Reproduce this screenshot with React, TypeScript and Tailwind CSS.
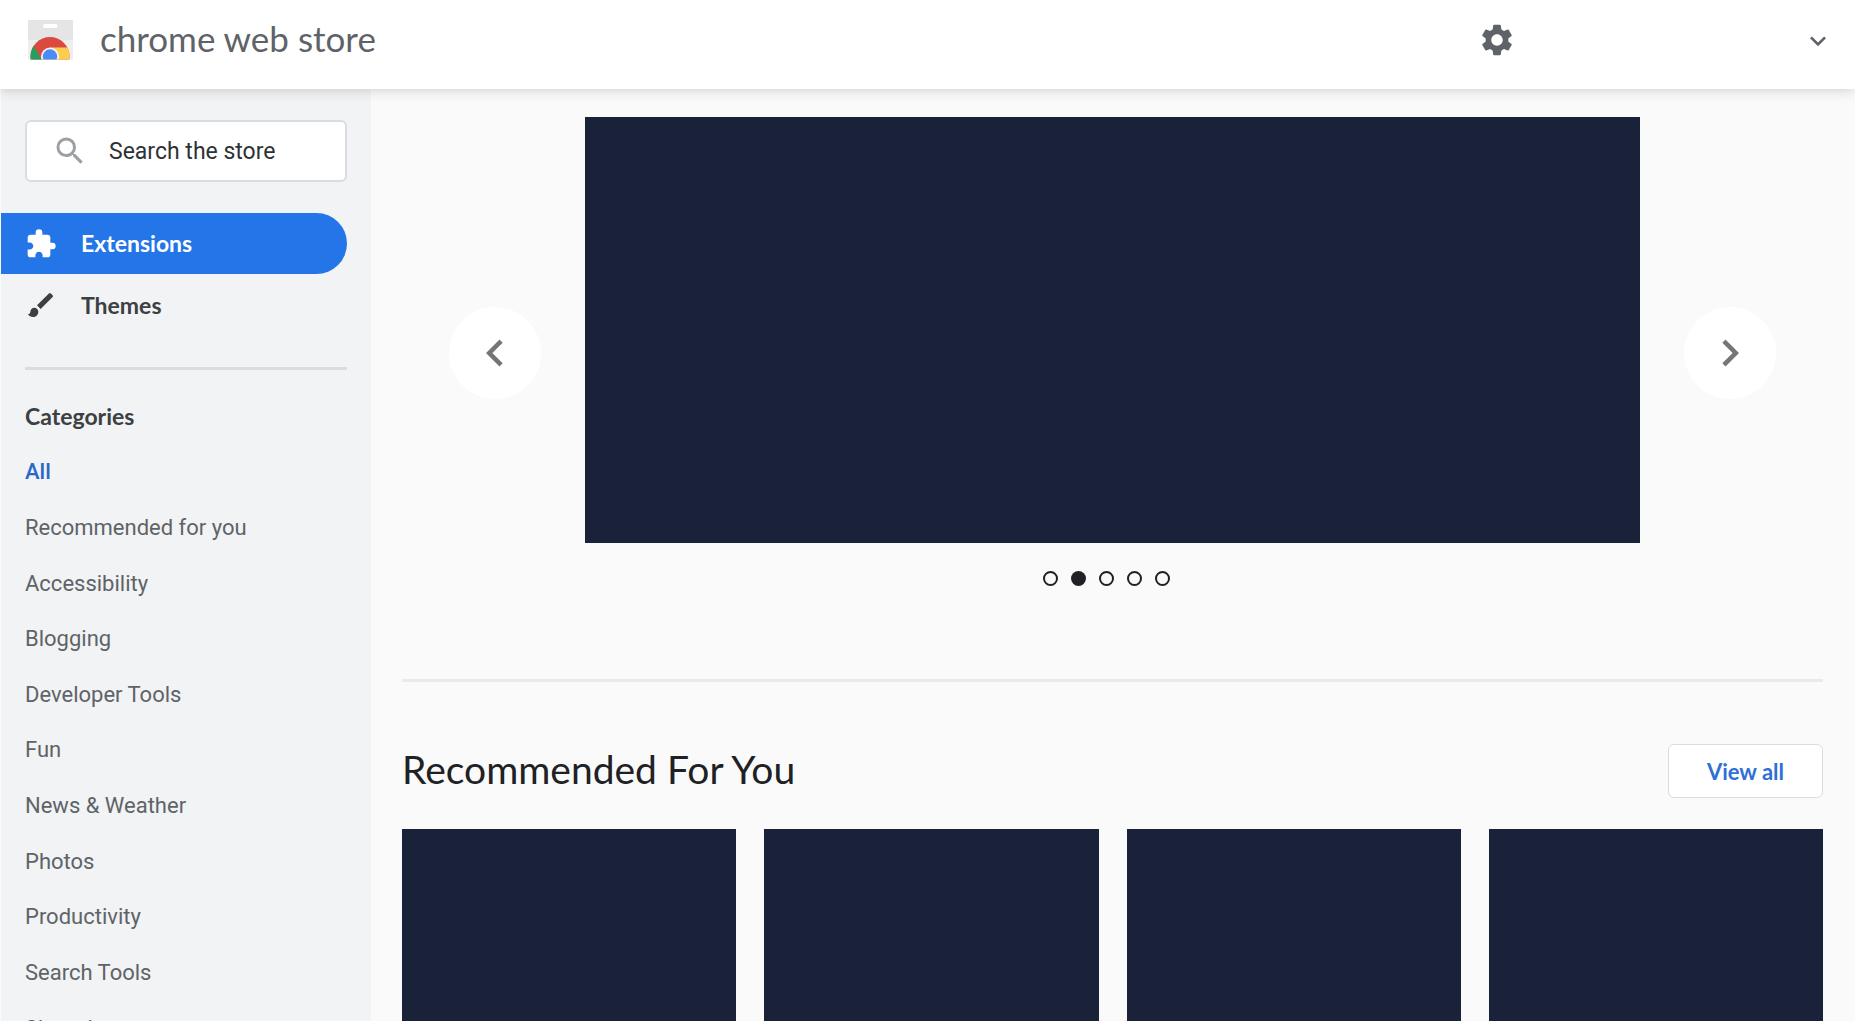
import type { ReactNode } from "react";
import {
  MdBrush,
  MdChevronLeft,
  MdChevronRight,
  MdExpandMore,
  MdExtension,
  MdSearch,
  MdSettings,
} from "react-icons/md";

const categories = [
  "All",
  "Recommended for you",
  "Accessibility",
  "Blogging",
  "Developer Tools",
  "Fun",
  "News & Weather",
  "Photos",
  "Productivity",
  "Search Tools",
  "Shopping",
];

const slides = [1, 2, 3, 4, 5];
const activeSlide = 2;
const recommended = ["first", "second", "third", "fourth"];

function StoreLogo() {
  return (
    <svg viewBox="0 0 45 40" className="h-10 w-[45px]" aria-hidden="true">
      <defs>
        <clipPath id="bag">
          <rect width="45" height="39.5" rx="1" />
        </clipPath>
        <clipPath id="wheel">
          <circle cx="22" cy="36.5" r="19.5" />
        </clipPath>
      </defs>
      <g clipPath="url(#bag)">
        <rect width="45" height="40" fill="#eeeeee" />
        <rect width="45" height="20" fill="#e5e5e5" />
        <rect x="15" y="4" width="14.5" height="4" rx="2" fill="#ffffff" />
        <g clipPath="url(#wheel)">
          <rect width="45" height="40" fill="#db4a3f" />
          <path d="M5.5 26 L14 40 H0 V26 Z" fill="#23a05d" />
          <path d="M22 27.5 H45 V40 H22 Z" fill="#fecd4e" />
        </g>
        <circle cx="22" cy="36.5" r="9" fill="#f4f4f4" />
        <circle cx="22" cy="36.5" r="7.2" fill="#4b8bf5" />
      </g>
    </svg>
  );
}

function CarouselButton({ label, children }: { label: string; children: ReactNode }) {
  return (
    <button
      type="button"
      aria-label={label}
      className="mt-[46px] flex size-[92px] shrink-0 items-center justify-center rounded-full bg-white text-[#757575]"
    >
      {children}
    </button>
  );
}

function Header() {
  return (
    <header className="relative z-10 flex h-[89px] shrink-0 items-center bg-white pr-[21px] pb-[9px] pl-7 text-[#5f6368] shadow-[0_1px_12px_rgba(0,0,0,0.18)]">
      <a href="#home" className="flex flex-1 items-center gap-[27px]">
        <StoreLogo />
        <span className="pb-1 font-[Lato] text-[35px] leading-9">chrome web store</span>
      </a>
      <button type="button" aria-label="Settings" className="mr-[286px]">
        <MdSettings className="size-[38px]" />
      </button>
      <button type="button" aria-label="Account menu" className="pt-0.5">
        <MdExpandMore className="size-8" />
      </button>
    </header>
  );
}

function Sidebar() {
  return (
    <aside className="w-[371px] shrink-0 border-l border-[#fafafa] bg-[#f1f3f4] pr-6">
      <label className="mt-[31px] ml-6 flex h-[62px] items-center gap-[21px] rounded-md border-2 border-[#dadce0] bg-white pl-[25px]">
        <MdSearch className="size-9 shrink-0 text-[#9aa0a6]" />
        <input
          type="text"
          aria-label="Search the store"
          placeholder="Search the store"
          className="h-9 w-full min-w-0 text-[23px] outline-none placeholder:text-[#2f3235]"
        />
      </label>

      <nav aria-label="Store sections" className="mt-[31px] font-[Lato] text-[23px] font-bold">
        <a href="#extensions" className="flex h-[61px] items-center gap-6 rounded-r-full bg-[#2475e8] pl-6 text-white">
          <MdExtension className="size-8" />
          Extensions
        </a>
        <a href="#themes" className="flex h-[62px] items-center gap-6 pl-6 text-[#3c4043]">
          <MdBrush className="size-8" />
          Themes
        </a>
      </nav>

      <hr className="mt-[31px] ml-6 border-t-[3px] border-[#dadce0]" />

      <h2 className="mt-[30px] ml-6 font-[Lato] text-[23px] leading-8 font-bold text-[#3c4043]">Categories</h2>
      <ul className="mt-3 ml-6 grid h-[612px] auto-rows-fr text-[22px] text-[#5f6368]">
        {categories.map((name) => (
          <li key={name} className="flex items-center">
            <a href="#category" className={name === "All" ? "font-medium text-[#2a68c8]" : ""}>
              {name}
            </a>
          </li>
        ))}
      </ul>
    </aside>
  );
}

export default function App() {
  return (
    <div className="flex h-screen flex-col overflow-hidden bg-[#fafafa] font-[Roboto,sans-serif]">
      <Header />
      <div className="flex min-h-0 flex-1">
        <Sidebar />
        <main className="min-w-0 flex-1 pt-7 pr-8 pl-[31px]">
          <section aria-label="Featured">
            <div className="flex items-center gap-11 px-[47px]">
              <CarouselButton label="Previous slide">
                <MdChevronLeft className="size-[54px]" />
              </CarouselButton>
              <div className="h-[426px] flex-1 bg-[#1a223a]" />
              <CarouselButton label="Next slide">
                <MdChevronRight className="size-[54px]" />
              </CarouselButton>
            </div>
            <div className="mt-7 flex h-4 items-start justify-center gap-[13px] pr-[13px]">
              {slides.map((n) => (
                <button
                  key={n}
                  type="button"
                  aria-label={`Slide ${n}`}
                  className={
                    n === activeSlide
                      ? "size-[15px] rounded-full bg-[#202124]"
                      : "size-[15px] rounded-full border-2 border-[#202124]"
                  }
                />
              ))}
            </div>
          </section>

          <hr className="mt-[92px] border-t-[3px] border-[#e8eaed]" />

          <section aria-labelledby="recommended">
            <div className="mt-[62px] flex items-center justify-between">
              <h1 id="recommended" className="pb-1 font-[Lato] text-[39px] leading-[50px] text-[#202124]">
                Recommended For You
              </h1>
              <button
                type="button"
                className="h-[54px] rounded-md border border-[#dadce0] bg-white px-[38px] font-[Lato] text-[22px] font-bold text-[#2f6fd6]"
              >
                View all
              </button>
            </div>
            <div className="mt-[31px] grid grid-cols-4 gap-7">
              {recommended.map((card) => (
                <a key={card} href="#item" aria-label={`Recommended item, ${card}`} className="h-60 bg-[#1a223a]" />
              ))}
            </div>
          </section>
        </main>
      </div>
    </div>
  );
}
